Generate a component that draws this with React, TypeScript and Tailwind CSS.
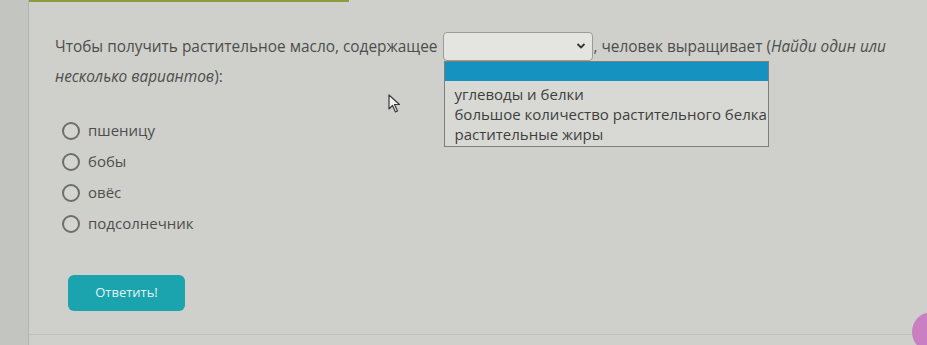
import React from "react";

const options = ["пшеницу", "бобы", "овёс", "подсолнечник"];

export default function App() {
  return (
    <div className="relative w-[927px] h-[345px] overflow-hidden bg-[#c6c8c4] font-['Open_Sans',sans-serif]">
      <div className="flex h-full">
        <div className="w-[28px] shrink-0 bg-[#c3c5c1]" />
        <div className="flex-1 flex flex-col bg-[#cfd0cc] border-l border-[#b3b5b1]">
          <div className="h-[2px] w-[320px] bg-[#8d9c3c]" />
          <div className="h-[333px] border-b border-[#bfc1bd] pl-[26px] pt-[30px]">
            <p className="text-[15.4px] leading-[30px] text-[#4d4e4c] w-[870px]">
              Чтобы получить растительное масло, содержащее{" "}
              <span className="relative inline-block align-middle ml-[2px] w-[150px] h-[29px] border border-[#9a9c98] rounded-[4px] bg-[#e4e5e1] -mt-[3px]">
                <svg className="absolute right-[6px] top-[9px]" width="10" height="8" viewBox="0 0 10 8">
                  <path d="M1.5 2 L5 5.5 L8.5 2" fill="none" stroke="#333" strokeWidth="1.8" />
                </svg>
                <span className="absolute left-0 top-[28px] z-10 w-[325px] border border-[#7c7e7a] bg-[#d8d9d5] text-[15px] leading-[20px] text-[#3e3f3d]">
                  <span className="block h-[19px] bg-[#1592bf]" />
                  <span className="block pl-[9px] pt-[3px]">углеводы и белки</span>
                  <span className="block pl-[9px] whitespace-nowrap">большое количество растительного белка</span>
                  <span className="block pl-[9px] pb-[2px]">растительные жиры</span>
                </span>
              </span>
              , человек выращивает (<i>Найди один или несколько вариантов</i>):
            </p>
            <div className="mt-[23px] flex flex-col pl-[7px]">
              {options.map((o) => (
                <label key={o} className="flex items-center gap-[8px] h-[31px] text-[15px] text-[#4d4e4c]">
                  <span className="w-[18px] h-[18px] rounded-full border-2 border-[#6c6e6a] bg-[#d4d5d1]" />
                  {o}
                </label>
              ))}
            </div>
            <button className="mt-[36px] ml-[13px] w-[117px] h-[36px] rounded-[6px] bg-[#1ba3ae] text-[13px] text-[#e2f4f4]">
              Ответить!
            </button>
          </div>
        </div>
      </div>
      <svg className="absolute left-[388px] top-[94px]" width="14" height="20" viewBox="0 0 14 20">
        <path d="M1 1 L1 15 L4.5 11.5 L7.5 18 L9.5 17 L6.5 10.5 L11.5 10.5 Z" fill="#f2f2f0" stroke="#3a3a3a" strokeWidth="1.2" strokeLinejoin="round" />
      </svg>
      <div className="absolute left-[912px] top-[312px] w-[40px] h-[40px] rounded-full bg-[#c97fc2]" />
    </div>
  );
}
